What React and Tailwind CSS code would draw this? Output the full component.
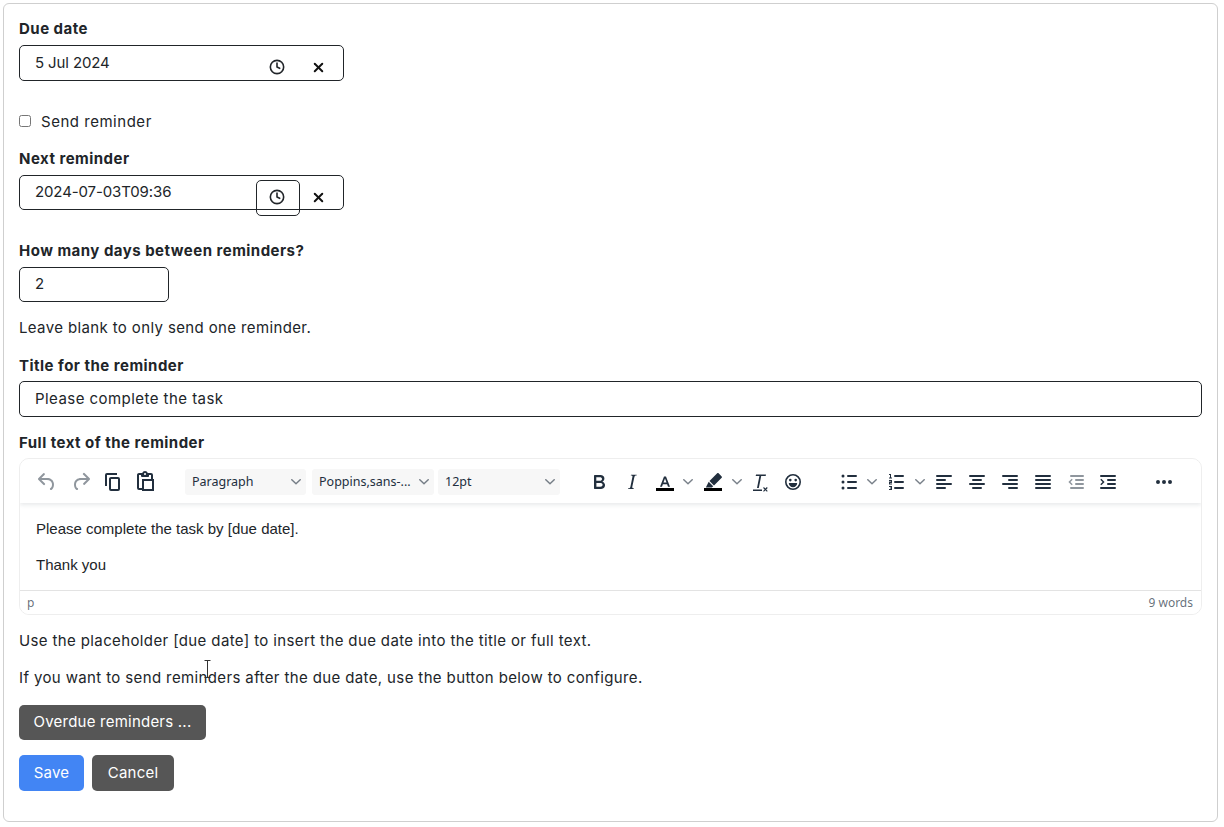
import { Clock4, X } from "lucide-react";

const ui = "font-['Noto_Sans',sans-serif]";
const label = "block text-[15px] leading-[22px] font-bold tracking-[0.032em] text-[#212529]";
const inputBox = "rounded-[5px] border border-[#212529] bg-white pl-[15px] text-[15px] text-[#212529] tracking-[0.03em]";
const body = "text-[15px] leading-[22px] tracking-[0.025em]";

function Icon({ d, className = "" }) {
  return (
    <svg width="24" height="24" viewBox="0 0 24 24" className={"fill-[#222f3e] " + className}>
      <path d={d} />
    </svg>
  );
}

const icons = {
  undo: "M6.4 8H12c3.7 0 6.2 2 6.8 5.1.6 2.7-.4 5.6-2.3 6.8a1 1 0 0 1-1-1.8c1.1-.6 1.8-2.7 1.4-4.6-.5-2.1-2.1-3.5-4.9-3.5H6.4l3.3 3.3a1 1 0 1 1-1.4 1.4l-5-5a1 1 0 0 1 0-1.4l5-5a1 1 0 0 1 1.4 1.4L6.4 8Z",
  redo: "M17.6 10H12c-2.8 0-4.4 1.4-4.9 3.5-.4 2 .3 4 1.4 4.6a1 1 0 1 1-1 1.8c-2-1.2-2.9-4.1-2.3-6.8.6-3 3-5.1 6.8-5.1h5.6l-3.3-3.3a1 1 0 1 1 1.4-1.4l5 5a1 1 0 0 1 0 1.4l-5 5a1 1 0 0 1-1.4-1.4l3.3-3.3Z",
  copy: "M16 3H6a2 2 0 0 0-2 2v11h2V5h10V3Zm1 4a2 2 0 0 1 2 2v10a2 2 0 0 1-2 2h-7a2 2 0 0 1-2-2V9c0-1.2.9-2 2-2h7Zm0 12V9h-7v10h7Z",
  paste: "M18 9V5h-2v1c0 .6-.4 1-1 1H9a1 1 0 0 1-1-1V5H6v13h3V9h9ZM9 20H6a2 2 0 0 1-2-2V5c0-1.1.9-2 2-2h3.2A3 3 0 0 1 12 1a3 3 0 0 1 2.8 2H18a2 2 0 0 1 2 2v4h1v12H9v-1Zm2-9v8h8v-8h-8ZM12 3a1 1 0 0 0-1 1c0 .5.4 1 1 1s1-.5 1-1-.4-1-1-1Z",
  bold: "M7.8 19c-.3 0-.5 0-.6-.2l-.2-.5V5.700c0-.2 0-.4.2-.5l.6-.2h5c1.500 0 2.700.3 3.500 1 .7.6 1.100 1.400 1.100 2.500a3 3 0 0 1-.6 1.900c-.4.6-1 1-1.600 1.200.4.1.9.3 1.300.6s.8.7 1 1.200c.4.4.5 1 .5 1.600 0 1.300-.4 2.300-1.300 3-.8.7-2.100 1-3.800 1H7.800Zm5-8.300c.6 0 1.200-.1 1.600-.5.4-.3.6-.7.6-1.300 0-1.100-.8-1.700-2.400-1.700H9.300v3.500h3.500Zm.5 6c.7 0 1.300-.1 1.700-.4.4-.4.6-.9.6-1.500s-.2-1-.7-1.400c-.4-.3-1-.4-2-.4H9.400v3.800h3.900Z",
  italic: "M16.7 4.700l-.1.900h-.3c-.6 0-1 0-1.400.3-.3.3-.4.6-.5 1.100l-2.100 9.800v.6c0 .5.4.8 1.400.8h.2l-.2.800H8l.2-.8h.2c1.100 0 1.800-.5 2-1.500l2-9.800.1-.5c0-.6-.4-.8-1.400-.8h-.3l.2-.9h5.800Z",
  textColor: "M15 16.800l-.9-2.600H9.900l-.9 2.600H7L11 6.500h2l4 10.300h-2Zm-1.500-4.200L12 8.500l-1.500 4.100h3Z",
  highlight: "M17.600 3.300l3.100 3.100c.4.4.4 1 0 1.400l-7.700 7.700-4.500-4.500 7.700-7.700c.4-.4 1-.4 1.400 0ZM7.700 11.800l4.500 4.500-1.300 1.200H4.800l2.900-5.700Z",
  clear: "M13.200 6l-2.400 12H9l2.400-12H7.700l.3-1.600h10l-.3 1.600h-4.500ZM5 19.500h9v1.600H5v-1.600Zm12.400-.9l1.500-1.500.8.8-1.500 1.500 1.500 1.500-.8.8-1.500-1.500-1.500 1.500-.8-.8 1.500-1.500-1.500-1.500.8-.8 1.500 1.500Z",
  emoji: "M12 4a8 8 0 1 1 0 16 8 8 0 0 1 0-16Zm0 1.600a6.400 6.400 0 1 0 0 12.800 6.400 6.400 0 0 0 0-12.800ZM9.300 8.800a1.300 1.300 0 1 1 0 2.600 1.300 1.300 0 0 1 0-2.600Zm5.400 0a1.300 1.300 0 1 1 0 2.600 1.300 1.300 0 0 1 0-2.600ZM7.800 13h8.400c0 2.400-1.900 4.200-4.200 4.200S7.800 15.400 7.800 13Z",
  bullist: "M11 5h8a1 1 0 0 1 0 2h-8a1 1 0 0 1 0-2Zm0 6h8a1 1 0 0 1 0 2h-8a1 1 0 0 1 0-2Zm0 6h8a1 1 0 0 1 0 2h-8a1 1 0 0 1 0-2ZM6 4.500a1.500 1.500 0 1 1 0 3 1.500 1.500 0 0 1 0-3Zm0 6a1.500 1.500 0 1 1 0 3 1.500 1.500 0 0 1 0-3Zm0 6a1.500 1.500 0 1 1 0 3 1.500 1.500 0 0 1 0-3Z",
  numlist: "M10 17h8a1 1 0 0 1 0 2h-8a1 1 0 0 1 0-2Zm0-6h8a1 1 0 0 1 0 2h-8a1 1 0 0 1 0-2Zm0-6h8a1 1 0 0 1 0 2h-8a1 1 0 0 1 0-2ZM6 4v3.500h1v1H4v-1h1V5H4V4h2Zm-2 6h3v3H5v.5h2v1H4v-3h2V11H4v-1Zm0 6h3v4H4v-1h2v-.5H5v-1h1V17H4v-1Z",
  left: "M5 5h14a1 1 0 0 1 0 2H5a1 1 0 1 1 0-2Zm0 4h8a1 1 0 0 1 0 2H5a1 1 0 1 1 0-2Zm0 8h8a1 1 0 0 1 0 2H5a1 1 0 0 1 0-2Zm0-4h14a1 1 0 0 1 0 2H5a1 1 0 0 1 0-2Z",
  center: "M5 5h14a1 1 0 0 1 0 2H5a1 1 0 1 1 0-2Zm3 4h8a1 1 0 0 1 0 2H8a1 1 0 1 1 0-2Zm0 8h8a1 1 0 0 1 0 2H8a1 1 0 0 1 0-2Zm-3-4h14a1 1 0 0 1 0 2H5a1 1 0 0 1 0-2Z",
  right: "M5 5h14a1 1 0 0 1 0 2H5a1 1 0 1 1 0-2Zm6 4h8a1 1 0 0 1 0 2h-8a1 1 0 0 1 0-2Zm0 8h8a1 1 0 0 1 0 2h-8a1 1 0 0 1 0-2Zm-6-4h14a1 1 0 0 1 0 2H5a1 1 0 0 1 0-2Z",
  justify: "M5 5h14a1 1 0 0 1 0 2H5a1 1 0 1 1 0-2Zm0 4h14a1 1 0 0 1 0 2H5a1 1 0 1 1 0-2Zm0 4h14a1 1 0 0 1 0 2H5a1 1 0 0 1 0-2Zm0 4h14a1 1 0 0 1 0 2H5a1 1 0 0 1 0-2Z",
  outdent: "M7 5h12a1 1 0 0 1 0 2H7a1 1 0 1 1 0-2Zm5 4h7a1 1 0 0 1 0 2h-7a1 1 0 0 1 0-2Zm0 4h7a1 1 0 0 1 0 2h-7a1 1 0 0 1 0-2Zm-5 4h12a1 1 0 0 1 0 2H7a1 1 0 0 1 0-2Zm-.6-5l2.300 2.300-1 1L4.400 12l3.300-3.300 1 1L6.400 12Z",
  indent: "M5 5h14a1 1 0 0 1 0 2H5a1 1 0 1 1 0-2Zm7 4h7a1 1 0 0 1 0 2h-7a1 1 0 0 1 0-2Zm0 4h7a1 1 0 0 1 0 2h-7a1 1 0 0 1 0-2Zm-7 4h14a1 1 0 0 1 0 2H5a1 1 0 0 1 0-2Zm.3-8.300L8.600 12l-3.300 3.300-1-1L6.600 12 4.300 9.700l1-1Z",
  more: "M6 10a2 2 0 1 1 0 4 2 2 0 0 1 0-4Zm6 0a2 2 0 1 1 0 4 2 2 0 0 1 0-4Zm6 0a2 2 0 1 1 0 4 2 2 0 0 1 0-4Z",
};

function Chevron({ className = "" }) {
  return (
    <svg width="10" height="10" viewBox="0 0 10 10" className={"fill-[#222f3e] opacity-60 " + className}>
      <path d="M8.700 2.200c.3-.3.800-.3 1 0 .4.200.4.700 0 1l-4.200 4c-.3.300-.7.300-1 0l-4.200-4c-.4-.3-.4-.800 0-1 .2-.3.700-.3 1 0L5 5.700l3.700-3.500Z" />
    </svg>
  );
}

function Tool({ name, x = "", dim }) {
  return (
    <span className={"flex w-[33px] justify-center " + x}>
      <Icon d={icons[name]} className={dim ? "opacity-50" : ""} />
    </span>
  );
}

function ToolSelect({ text, width, mr }) {
  return (
    <div className={"flex h-[26px] items-center justify-between rounded-[3px] bg-[#f7f7f7] pl-[7px] pr-[5px] text-[12.5px] text-[#222f3e] " + width + " " + mr}>
      <span>{text}</span>
      <Chevron />
    </div>
  );
}

function Swatch({ name, x = "" }) {
  return (
    <span className={"relative flex w-[26px] justify-center " + x}>
      <Icon d={icons[name]} />
      <span className="absolute bottom-[3px] left-[4px] h-[3px] w-[18px] bg-black" />
    </span>
  );
}

function DateField({ value, boxed, height }) {
  return (
    <div className={"relative flex w-[325px] items-center " + height + " " + inputBox}>
      <span className="tracking-[-0.008em]">{value}</span>
      <span
        className={
          "absolute left-[236px] top-[4px] flex h-[36px] w-[44px] items-center justify-center rounded-[5px] " +
          (boxed ? "border border-[#212529]" : "")
        }
      >
        <Clock4 size={16} strokeWidth={2.4} className="relative left-[-1px] top-[-1px] text-[#212529]" />
      </span>
      <span className="absolute left-[291px] top-[14px]">
        <X size={15} strokeWidth={3.2} className="text-[#111]" />
      </span>
    </div>
  );
}

function Editor() {
  return (
    <div className={"mt-[4px] overflow-hidden rounded-[10px] border border-[#eeeeee] " + ui}>
      <div className="relative z-10 flex h-[44px] items-center bg-white pl-[10px] pt-[2px] shadow-[0_2px_4px_rgba(34,47,62,0.1)]">
        <Tool name="undo" x="mr-[1px]" dim />
        <Tool name="redo" x="mr-[-1px]" dim />
        <Tool name="copy" x="mr-[-1px]" />
        <Tool name="paste" x="mr-[24px]" />
        <ToolSelect text="Paragraph" width="w-[121px]" mr="mr-[6px]" />
        <ToolSelect text="Poppins,sans-..." width="w-[122px]" mr="mr-[4px]" />
        <ToolSelect text="12pt" width="w-[122px]" mr="mr-[22px]" />
        <Tool name="bold" />
        <Tool name="italic" />
        <Swatch name="textColor" x="ml-[4px]" />
        <Chevron className="ml-[5px] mr-[7px]" />
        <Swatch name="highlight" />
        <Chevron className="ml-[6px] mr-[5px]" />
        <Tool name="clear" x="ml-[-4px]" />
        <Tool name="emoji" x="mr-[28px]" />
        <span className="flex w-[24px] justify-center"><Icon d={icons.bullist} /></span>
        <Chevron className="ml-[6px] mr-[8px]" />
        <span className="flex w-[24px] justify-center"><Icon d={icons.numlist} /></span>
        <Chevron className="ml-[6px] mr-[7px]" />
        <Tool name="left" x="ml-[-5px]" />
        <Tool name="center" />
        <Tool name="right" />
        <Tool name="justify" />
        <Tool name="outdent" x="mr-[-1px]" dim />
        <Tool name="indent" x="mr-[23px]" />
        <Tool name="more" />
      </div>
      <div className="h-[87px] bg-white pl-[16px] pt-[16px] font-['Liberation_Sans',sans-serif] text-[15px] leading-[20px] text-[#212529]">
        <p>Please complete the task by [due date].</p>
        <p className="mt-[16px]">Thank you</p>
      </div>
      <div className="flex h-[24px] items-center justify-between border-t border-[#e3e3e3] bg-white pl-[7px] pr-[8px] text-[12px] text-[#222f3e]/70">
        <span>p</span>
        <span>9 words</span>
      </div>
    </div>
  );
}

function Button({ children, blue, size }) {
  return (
    <button className={"rounded-[5px] text-center text-[15px] tracking-[0.015em] text-white " + size + " " + (blue ? "bg-[#4285f4]" : "bg-[#565656]")}>
      {children}
    </button>
  );
}

export default function App() {
  return (
    <div className="h-[827px] bg-white p-[3px] font-['Inter',sans-serif] text-[#212529]">
      <div className="relative h-[819px] w-[1215px] rounded-[6px] border border-[#cfcfcf] px-[15px] pt-[14px]">
        <label className={label}>Due date</label>
        <div className="mt-[5px]"><DateField value="5 Jul 2024" height="h-[36px]" /></div>

        <div className="mt-[30px] flex h-[22px] items-center">
          <input type="checkbox" className="relative top-[-1px] h-[12px] w-[12px]" readOnly />
          <span className="ml-[10px] text-[15px] tracking-[0.035em]">Send reminder</span>
        </div>

        <label className={label + " mt-[15px]"}>Next reminder</label>
        <div className="mt-[5px]"><DateField value="2024-07-03T09:36" boxed height="h-[35px]" /></div>

        <label className={label + " mt-[30px]"}>How many days between reminders?</label>
        <div className={"mt-[5px] flex h-[35px] w-[150px] items-center " + inputBox}>2</div>
        <p className={"mt-[15px] " + body}>Leave blank to only send one reminder.</p>

        <label className={label + " mt-[16px]"}>Title for the reminder</label>
        <div className={"mt-[4px] flex h-[36px] items-center " + inputBox}>Please complete the task</div>

        <label className={label + " mt-[15px]"}>Full text of the reminder</label>
        <Editor />

        <p className={"mt-[15px] " + body}>
          Use the placeholder [due date] to insert the due date into the title or full text.
        </p>
        <p className={"mt-[15px] " + body}>
          If you want to send reminders after the due date, use the button below to configure.
        </p>

        <div className="mt-[16px]"><Button size="h-[35px] w-[187px]">Overdue reminders ...</Button></div>
        <div className="mt-[15px] flex gap-[8px]">
          <Button blue size="h-[36px] w-[65px]">Save</Button>
          <Button size="h-[36px] w-[82px]">Cancel</Button>
        </div>

        {/* mouse pointer caught in the screenshot */}
        <svg width="7" height="18" viewBox="0 0 7 18" className="absolute left-[200px] top-[656px] stroke-[#333]">
          <path d="M0.500 0.500h6M3.500 0.500v17M0.500 17.500h6" fill="none" />
        </svg>
      </div>
    </div>
  );
}
